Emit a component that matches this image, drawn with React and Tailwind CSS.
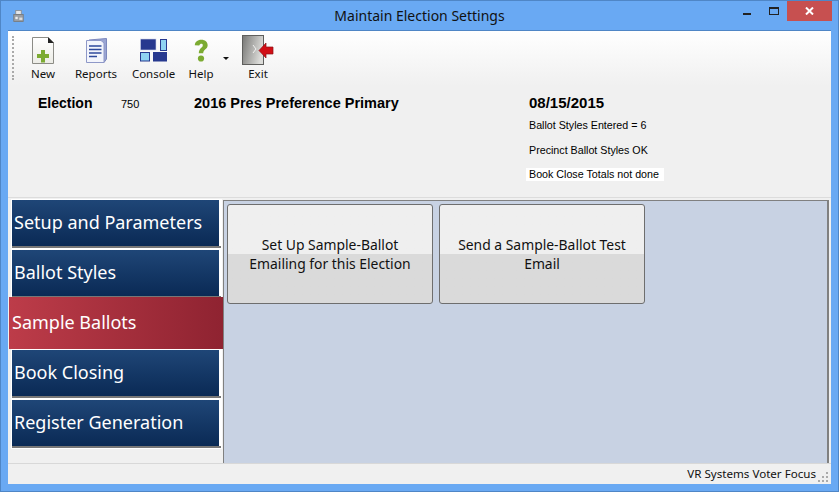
import React from "react";

const sans = "font-['Liberation_Sans',Arial,sans-serif]";
const ui = "font-['Noto_Sans','Open_Sans',sans-serif]";

function NewIcon() {
  return (
    <svg width="22" height="27" viewBox="0 0 22 27">
      <defs>
        <linearGradient id="page" x1="0" y1="0" x2="0" y2="1">
          <stop offset="0" stopColor="#ffffff" />
          <stop offset="1" stopColor="#ececE6" />
        </linearGradient>
      </defs>
      <path d="M0.5 0.5H16L21.5 6V26.5H0.5Z" fill="url(#page)" stroke="#8c8c86" />
      <path d="M16 0L22 6H16Z" fill="#222" />
      <path d="M9 13H13V17H17V21H13V25.5H9V21H5V17H9Z" fill="#7cab32" />
    </svg>
  );
}

function ReportsIcon() {
  return (
    <svg width="21" height="25" viewBox="0 0 21 25">
      <path d="M3 2L20.5 0.5V21L18 24.5H3Z" fill="#9aa5d3" stroke="#7d88bd" />
      <path d="M0.5 2.5H15L18 5V24.5H0.5Z" fill="#f3f5fc" stroke="#8e98c8" />
      <path d="M3 8H15.5M3 11.5H15.5M3 15H15.5M3 18.5H11" stroke="#2f4a9c" strokeWidth="1.6" />
    </svg>
  );
}

function ConsoleIcon() {
  return (
    <svg width="28" height="24" viewBox="0 0 28 24">
      <rect x="0.5" y="1" width="15.5" height="11" fill="#27398f" stroke="#cfd5ec" strokeWidth="0.6" />
      <rect x="20.5" y="1.5" width="6" height="11" fill="#8fd3f2" stroke="#27398f" />
      <rect x="0.5" y="14.5" width="9" height="8.5" fill="#8fd3f2" stroke="#27398f" />
      <rect x="13" y="14" width="14" height="9.5" fill="#27398f" />
    </svg>
  );
}

function HelpIcon() {
  return (
    <svg width="16" height="25" viewBox="0 0 18 26">
      <path
        d="M2 7C2.5 2.5 6 1 9.5 1C13.5 1 16.5 3.5 16.5 7C16.5 11.5 11.5 11.5 11.5 16H6.5C6.5 10 11 10 11 7C11 5.2 8 4.6 7 7.5Z"
        fill="#7cab32"
      />
      <circle cx="9" cy="22" r="3.5" fill="#7cab32" />
    </svg>
  );
}

function ExitIcon() {
  return (
    <svg width="32" height="30" viewBox="0 0 32 30">
      <defs>
        <linearGradient id="door" x1="0" y1="0" x2="1" y2="0.3">
          <stop offset="0" stopColor="#777775" />
          <stop offset="1" stopColor="#dcdcd9" />
        </linearGradient>
      </defs>
      <rect x="0.5" y="0.5" width="21" height="29" fill="url(#door)" stroke="#5f5f5d" />
      <path d="M11 10L14 14L11 18" stroke="#efefef" strokeWidth="1" fill="none" />
      <path d="M17 15.5L24 8V12H31V19H24V23Z" fill="#d10f16" stroke="#8e1116" strokeWidth="0.7" />
    </svg>
  );
}

function ToolItem({ icon, label, className }) {
  return (
    <div className={`flex flex-col items-center ${className}`}>
      <div className="h-[32px] flex items-center justify-center">{icon}</div>
      <span className={`${ui} text-[11.5px] leading-[16px] text-[#111] whitespace-nowrap`}>{label}</span>
    </div>
  );
}

function NavButton({ label }) {
  return (
    <div className="h-[50px] w-[211px] ml-[3px] bg-white pl-[1px] pt-[1px]">
      <div className="h-[48px] w-[209px] border-b-2 border-[#777]">
        <div className="h-[46px] w-[207px] bg-gradient-to-b from-[#1f4677] to-[#0a2a55] flex items-center pl-[2px] pb-[2px]">
          <span className={`${ui} text-[18px] leading-none text-white whitespace-nowrap`}>{label}</span>
        </div>
      </div>
    </div>
  );
}

function BigButton({ lines }) {
  return (
    <div className="w-[206px] h-[100px] rounded-[3px] border border-[#6e6e6e] bg-gradient-to-b from-[#efefef] from-50% to-[#dadada] to-50% flex flex-col items-center justify-center">
      {lines.map((l) => (
        <span key={l} className={`${ui} text-[13.9px] leading-[19px] text-[#111] whitespace-nowrap`}>
          {l}
        </span>
      ))}
    </div>
  );
}

export default function App() {
  return (
    <div className="w-[839px] h-[492px] bg-[#69a9f3] border border-[#4f86c6] flex flex-col overflow-hidden">
      {/* title bar */}
      <div className="h-[29px] flex items-center relative shrink-0">
        <svg className="ml-[12px] mt-[1px]" width="11" height="14" viewBox="0 0 14 16">
          <rect x="3.5" y="1" width="7" height="5" fill="#e4e6e9" stroke="#8a8a8a" />
          <rect x="1" y="6" width="12" height="9" fill="#9a9ea4" stroke="#777" />
          <rect x="3" y="9" width="3" height="3" fill="#eee" />
          <rect x="8" y="10" width="4" height="3" fill="#ddd" />
        </svg>
        <div className={`${ui} absolute left-0 right-0 text-center text-[14px] text-[#111]`}>Maintain Election Settings</div>
        <div className="ml-auto flex items-center h-full mr-[6px]">
          <div className="w-[8px] h-[2px] bg-[#222] mr-[18px] mt-[-3px]" />
          <div className="w-[10px] h-[8px] border border-[#222] border-t-2 mr-[8px] mt-[-9px]" />
          <div className="w-[45px] h-[20px] mt-[-9px] bg-[#c75050] flex items-center justify-center">
            <svg width="9" height="8" viewBox="0 0 9 8">
              <path d="M1 0.5L8 7.5M8 0.5L1 7.5" stroke="#fff" strokeWidth="2" />
            </svg>
          </div>
        </div>
      </div>

      {/* client area */}
      <div className="mx-[7px] h-[454px] bg-[#f0f0f0] border-t border-[#4f86c6] flex flex-col">
        {/* toolbar */}
        <div className="h-[55px] shrink-0 bg-gradient-to-b from-white to-[#f0f0f0] flex pl-[4px] pt-[3px]">
          <div className="w-[2px] h-[44px] mt-[2px] border-l-2 border-dotted border-[#aaa]" />
          <ToolItem icon={<NewIcon />} label="New" className="w-[22px] ml-[18px]" />
          <ToolItem icon={<ReportsIcon />} label="Reports" className="w-[40px] ml-[22px]" />
          <ToolItem icon={<ConsoleIcon />} label="Console" className="w-[43px] ml-[16px]" />
          <ToolItem icon={<HelpIcon />} label="Help" className="w-[26px] ml-[13px]" />
          <div className="w-0 h-0 ml-[9px] mt-[23px] border-x-[3px] border-t-[3px] border-x-transparent border-t-[#111]" />
          <ToolItem icon={<ExitIcon />} label="Exit" className="w-[32px] ml-[13px]" />
        </div>

        {/* election header */}
        <div className={`${sans} h-[111px] shrink-0 flex text-[#000]`}>
          <div className="w-[113px] pl-[30px] pt-[9px] text-[14px] leading-[16px] font-bold">Election</div>
          <div className="w-[73px] pt-[11px] text-[11px] leading-[14px]">750</div>
          <div className="w-[335px] pt-[9px] text-[14.5px] leading-[16px] font-bold whitespace-nowrap">2016 Pres Preference Primary</div>
          <div className="flex flex-col items-start">
            <div className="pt-[9px] text-[15px] leading-[16px] font-bold">08/15/2015</div>
            <div className="mt-[7px] text-[10.7px] leading-[14px]">Ballot Styles Entered = 6</div>
            <div className="mt-[11px] text-[10.7px] leading-[14px]">Precinct Ballot Styles OK</div>
            <div className="mt-[11px] bg-white -ml-[3px] pl-[3px] pr-[5px] text-[10.7px] leading-[13px]">Book Close Totals not done</div>
          </div>
        </div>

        {/* body */}
        <div className="flex-1 flex border-t border-[#dcdcdc] min-h-0 pt-[1px]">
          <div className="w-[215px] shrink-0">
            <NavButton label="Setup and Parameters" />
            <NavButton label="Ballot Styles" />
            <div className="h-[52px] -mt-[2px] w-[214px] ml-[1px] bg-gradient-to-r from-[#bd3c49] to-[#8f2331] flex items-center pl-[3px] pb-[3px]">
              <span className={`${ui} text-[18px] leading-none text-white`}>Sample Ballots</span>
            </div>
            <NavButton label="Book Closing" />
            <NavButton label="Register Generation" />
          </div>
          <div className="flex-1 mt-[1px] mr-[2px] bg-[#c8d2e3] border-l border-t border-r-2 border-[#808080] flex gap-[6px] pl-[3px] pt-[3px]">
            <BigButton lines={["Set Up Sample-Ballot", "Emailing for this Election"]} />
            <BigButton lines={["Send a Sample-Ballot Test", "Email"]} />
          </div>
        </div>

        {/* status bar */}
        <div className={`${ui} h-[21px] shrink-0 border-t border-[#d8d8d8] flex items-center justify-end pr-[15px] text-[11.6px] text-[#111] relative`}>
          VR Systems Voter Focus
          <svg className="absolute right-[3px] bottom-[2px]" width="10" height="10" viewBox="0 0 10 10" fill="#aaa">
            <rect x="8" y="0" width="2" height="2" />
            <rect x="4" y="4" width="2" height="2" />
            <rect x="8" y="4" width="2" height="2" />
            <rect x="0" y="8" width="2" height="2" />
            <rect x="4" y="8" width="2" height="2" />
            <rect x="8" y="8" width="2" height="2" />
          </svg>
        </div>
      </div>
    </div>
  );
}
